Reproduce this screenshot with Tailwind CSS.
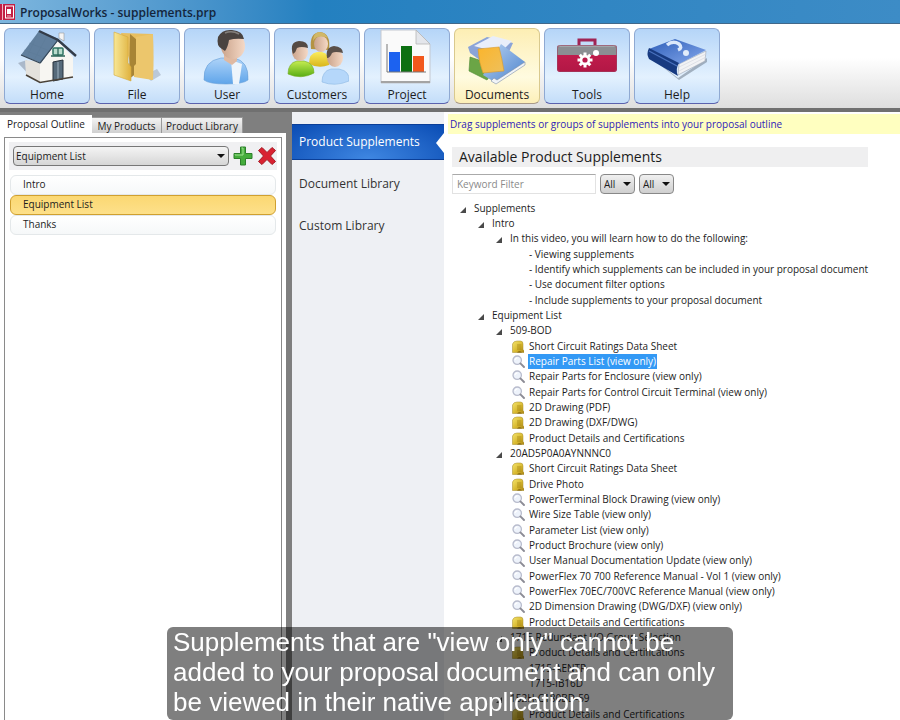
<!DOCTYPE html>
<html lang="en">
<head>
<meta charset="utf-8">
<meta name="viewport" content="width=device-width, initial-scale=1">
<title>ProposalWorks - supplements.prp</title>
<script src="https://cdn.jsdelivr.net/npm/@tailwindcss/browser@4"></script>
</head>
<body class="h-screen overflow-hidden flex flex-col bg-white text-[#1c1c1c] font-['Open_Sans','Noto_Sans',sans-serif]">

<svg class="absolute w-0 h-0" aria-hidden="true">
  <defs>
    <linearGradient id="gold" x1="0" y1="0" x2="1" y2="1"><stop offset="0" stop-color="#f4e46c"/><stop offset=".6" stop-color="#d6b62c"/><stop offset="1" stop-color="#a88418"/></linearGradient>
    <symbol id="doc" viewBox="0 0 12 13">
      <path d="M.5 4 Q1.500 1 5 1 H8.500 Q11 1 11 4 V9.500 L12 10.500 V12.500 H.5Z" fill="url(#gold)" stroke="#a58a28" stroke-width=".5"/>
      <path d="M5 5H9.500M5 7H9.500M5 9H9.500" stroke="#96760f" stroke-width=".6"/>
      <path d="M5 12.500 Q7.500 10 10 12.500Z" fill="#80620e"/>
    </symbol>
    <symbol id="lens" viewBox="0 0 13 13">
      <circle cx="5.2" cy="5.2" r="4.2" fill="#eef3fb" stroke="#b8bccd" stroke-width="1.3"/>
      <path d="M3 5Q3.3 3 5.4 2.8" stroke="#fff" stroke-width="1.2" fill="none"/>
      <path d="M8.4 8.4L12 12" stroke="#8c8c96" stroke-width="1.9" stroke-linecap="round"/>
    </symbol>
    <symbol id="open" viewBox="0 0 6 6"><path d="M6 0V6H0Z" fill="#4a4a4a"/></symbol>
  </defs>
</svg>

<header class="shrink-0">
  <div class="flex items-center gap-1 h-6 border-b border-[#41688a] bg-linear-to-r from-[#7db6de] via-[#2380c0] via-35% to-[#3d8cc6]">
    <svg class="w-4 h-4" viewBox="0 0 16 16" aria-hidden="true"><rect width="15" height="16" fill="#c31f44"/><path d="M2.5 0V16" stroke="#f2b8c4"/><rect x="5.5" y="2" width="8" height="12" fill="#c31f44" stroke="#fff"/><rect x="7" y="5" width="4" height="5" fill="#fff"/><path d="M7 12h4" stroke="#f2b8c4"/></svg>
    <h1 class="mt-0.5 text-xs font-semibold text-[#14263c]">ProposalWorks - supplements.prp</h1>
  </div>
  <nav aria-label="Main" class="flex gap-1 px-1 pt-1 pb-1 bg-linear-to-b from-white from-40% to-[#dedede] border-b-4 border-[#707070]">
    <button class="w-[86px] h-19 flex flex-col items-center justify-between rounded-md border border-[#8fa9d2] border-b-[#5b62ae] bg-linear-to-b from-[#b5d5f8] via-[#e3f1fe] via-65% to-[#c3ddf9] text-xs leading-4">
      <svg class="w-16 h-14" viewBox="0 0 64 56" aria-hidden="true">
        <path d="M3 34L12 31V46L20 52Z" fill="#8c98a8" opacity=".6"/>
        <path d="M10 31L25 33V53L11 46Z" fill="#e4e2dd"/><path d="M25 33L43 12L58 28V48L25 53Z" fill="#f7f6f2"/>
        <path d="M44 4h5v8l-5-3z" fill="#f5f5f5" stroke="#999" stroke-width=".6"/>
        <path d="M24 2L44 10L26 34L6 26Z" fill="#617f9d"/><path d="M24 2L12 28M33 5L19 31M9 21L30 29M14 14L35 22" stroke="#5b7894" stroke-width=".4"/>
        <path d="M24 2L43 11L61 27" stroke="#333c49" stroke-width="2.4" fill="none"/><path d="M43 11L25 34L6 26" stroke="#384858" stroke-width="1.2" fill="none"/>
        <path d="M38 33L48 31V50L38 52Z" fill="#566a7a" stroke="#28323c"/><path d="M43 33V51" stroke="#9fb3c2" stroke-width="1"/>
        <rect x="38" y="19" width="10" height="7" rx="1" fill="#b9dccd" stroke="#2d7362" stroke-width="1.5"/><path d="M43 19V27M36 27H50" stroke="#2d6558" stroke-width="1.3"/>
        <path d="M11 46L25 53.500L58 48" stroke="#4a4238" stroke-width="1.6" fill="none"/>
      </svg>Home</button>
    <button class="w-[86px] h-19 flex flex-col items-center justify-between rounded-md border border-[#8fa9d2] border-b-[#5b62ae] bg-linear-to-b from-[#b5d5f8] via-[#e3f1fe] via-65% to-[#c3ddf9] text-xs leading-4">
      <svg class="w-16 h-14" viewBox="0 0 64 56" aria-hidden="true">
        <defs><linearGradient id="f1"><stop offset="0" stop-color="#f8e795"/><stop offset="1" stop-color="#dfb13e"/></linearGradient></defs>
        <path d="M40 46L52 40L56 46L46 52Z" fill="#a9b8c8" opacity=".7"/>
        <path d="M16 4L48 5Q49 30 48 51L29 46Z" fill="#e8bf60"/>
        <path d="M25 5L32 11V44L24 50Z" fill="#a88435"/>
        <path d="M31 8L48 5V51L29 48V37L31 35Z" fill="#ecc66c"/>
        <path d="M9 3L23 8V34L26 38V52L9 46Z" fill="url(#f1)" stroke="#d5aa3d" stroke-width=".6"/>
      </svg>File</button>
    <button class="w-[86px] h-19 flex flex-col items-center justify-between rounded-md border border-[#8fa9d2] border-b-[#5b62ae] bg-linear-to-b from-[#b5d5f8] via-[#e3f1fe] via-65% to-[#c3ddf9] text-xs leading-4">
      <svg class="w-16 h-14" viewBox="0 0 64 56" aria-hidden="true">
        <defs>
          <linearGradient id="skin"><stop offset="0" stop-color="#c9a28a"/><stop offset="1" stop-color="#f5d9c6"/></linearGradient>
          <linearGradient id="blue" x1="0" y1="0" x2="0" y2="1"><stop offset="0" stop-color="#aed3f8"/><stop offset="1" stop-color="#5fa5ea"/></linearGradient>
        </defs>
        <path d="M9 51Q8 32 26 29H39Q54 32 53 51Q48 55 31 55Q14 55 9 51Z" fill="url(#blue)" stroke="#6a9fd6" stroke-width=".6"/>
        <path d="M36 31L47 35L44 55H38Z" fill="#edf4fb"/>
        <path d="M29 23H42V32L37 36L29 31Z" fill="#dfb9a2"/>
        <ellipse cx="38" cy="17" rx="12" ry="13" fill="url(#skin)"/>
        <path d="M27 20Q21 17 23 8Q27 0 37 1Q48 2 49 10Q40 9 34 11Q33 18 30 22Z" fill="#4a4340"/>
        <path d="M30 4Q37 1 44 5" stroke="#85807c" stroke-width="1.500" fill="none"/>
      </svg>User</button>
    <button class="w-[86px] h-19 flex flex-col items-center justify-between rounded-md border border-[#8fa9d2] border-b-[#5b62ae] bg-linear-to-b from-[#b5d5f8] via-[#e3f1fe] via-65% to-[#c3ddf9] text-xs leading-4">
      <svg class="w-16 h-14" viewBox="0 0 64 56" aria-hidden="true">
        <defs>
          <linearGradient id="gr" x1="0" y1="0" x2="0" y2="1"><stop offset="0" stop-color="#c5ec51"/><stop offset="1" stop-color="#58ad14"/></linearGradient>
          <linearGradient id="ye" x1="0" y1="0" x2="0" y2="1"><stop offset="0" stop-color="#faec5c"/><stop offset="1" stop-color="#d9b51c"/></linearGradient>
        </defs>
        <path d="M24 35Q24 24 32 23H37Q45 25 44 36Q34 40 24 35Z" fill="url(#ye)"/>
        <path d="M26 20Q24 4 35 3Q46 4 44 21Z" fill="#b49343"/><ellipse cx="36" cy="15" rx="7" ry="8" fill="url(#skin)"/>
        <path d="M28 12Q32 5 43 9Q40 3 34 3Q28 4 28 12Z" fill="#d1b868"/>
        <path d="M3 45Q3 34 12 32H19Q29 34 29 44Q16 51 3 45Z" fill="url(#gr)" stroke="#75ad21" stroke-width=".6"/>
        <ellipse cx="15" cy="23" rx="8" ry="9" fill="url(#skin)"/><path d="M8 25Q4 13 14 12Q23 12 23 19Q16 17 12 19Q11 23 8 25Z" fill="#554a43"/>
        <path d="M37 53Q37 42 46 40H54Q65 42 64 52Q50 58 37 53Z" fill="#b5d7fa" stroke="#8cb7e2" stroke-width=".6"/>
        <ellipse cx="50" cy="29" rx="8" ry="9" fill="url(#skin)"/><path d="M42 29Q40 18 49 17Q58 18 58 24Q50 22 47 24Q45 29 42 29Z" fill="#5b5049"/>
      </svg>Customers</button>
    <button class="w-[86px] h-19 flex flex-col items-center justify-between rounded-md border border-[#8fa9d2] border-b-[#5b62ae] bg-linear-to-b from-[#b5d5f8] via-[#e3f1fe] via-65% to-[#c3ddf9] text-xs leading-4">
      <svg class="w-16 h-14" viewBox="0 0 64 56" aria-hidden="true">
        <path d="M6 1H41L55 15V54H6Z" fill="#fafafa" stroke="#c4c8d0"/><path d="M41 1V15H55Z" fill="#e4e6eb" stroke="#b5b5b5" stroke-width=".8"/>
        <path d="M6 53H55" stroke="#a4a4a4" stroke-width="2"/>
        <rect x="14" y="23" width="11" height="20" fill="#1c62f0"/><rect x="26" y="17" width="11" height="26" fill="#0d7012"/><rect x="38" y="27" width="11" height="16" fill="#f2581c"/>
        <path d="M12 15V43H51" stroke="#777" fill="none"/>
      </svg>Project</button>
    <button aria-pressed="true" class="w-[86px] h-19 flex flex-col items-center justify-between rounded-md border border-[#d9c98e] border-b-[#a99a8a] bg-linear-to-b from-[#fdeeb4] via-[#fffbe0] via-65% to-[#fdefb8] text-xs leading-4">
      <svg class="w-16 h-14" viewBox="0 0 64 56" aria-hidden="true">
        <defs><linearGradient id="or" x1="0" y1="0" x2="1" y2="1"><stop offset="0" stop-color="#fbb52c"/><stop offset="1" stop-color="#eec05c"/></linearGradient>
        <linearGradient id="bp" x1="0" y1="0" x2="1" y2="1"><stop offset="0" stop-color="#b9d2f2"/><stop offset="1" stop-color="#4b83cd"/></linearGradient></defs>
        <path d="M3 18L22 8L48 14L34 45L5 24Z" fill="#8ba4d8"/><path d="M9 17L28 7L47 12L35 24Z" fill="#e9eefa"/>
        <path d="M5 28L32 37L22 51L4 42Z" fill="#6ba546" stroke="#4d8a36" stroke-width=".6"/>
        <path d="M36 15L60 33L31 54L18 46Z" fill="url(#bp)"/><path d="M60 33V36L31 55L26 52L29 49L32 51Z" fill="#f1f4f8" stroke="#8091a8" stroke-width=".6"/>
        <path d="M13 20L34 18Q37 29 39 42L18 44Q14 34 13 20Z" fill="url(#or)" stroke="#d9992c" stroke-width=".6"/>
      </svg>Documents</button>
    <button class="w-[86px] h-19 flex flex-col items-center justify-between rounded-md border border-[#8fa9d2] border-b-[#5b62ae] bg-linear-to-b from-[#b5d5f8] via-[#e3f1fe] via-65% to-[#c3ddf9] text-xs leading-4">
      <svg class="w-16 h-14" viewBox="0 0 64 56" aria-hidden="true">
        <defs><linearGradient id="rd" x1="0" y1="0" x2="0" y2="1"><stop offset="0" stop-color="#c81f50"/><stop offset="1" stop-color="#b21745"/></linearGradient></defs>
        <path d="M24 16V11H40V16" fill="none" stroke="#a02455" stroke-width="3"/>
        <rect x="2" y="16" width="60" height="27" rx="3" fill="url(#rd)"/>
        <path d="M2 26V19Q2 16 5 16H59Q62 16 62 19V26Z" fill="#8b8e92"/><path d="M3 17H61" stroke="#b9bcc0"/>
        <rect x="2.500" y="16.500" width="59" height="26" rx="3" fill="none" stroke="#9d4262" stroke-opacity=".6"/>
        <path d="M30 23.500V38.500M22.500 31H37.500M24.700 25.700L35.300 36.300M24.700 36.300L35.300 25.700" stroke="#fff" stroke-width="3"/>
        <circle cx="30" cy="31" r="5.200" fill="#fff"/><circle cx="30" cy="31" r="2.600" fill="#b81a4b"/><circle cx="41" cy="24" r="3" fill="#fff"/>
      </svg>Tools</button>
    <button class="w-[86px] h-19 flex flex-col items-center justify-between rounded-md border border-[#8fa9d2] border-b-[#5b62ae] bg-linear-to-b from-[#b5d5f8] via-[#e3f1fe] via-65% to-[#c3ddf9] text-xs leading-4">
      <svg class="w-16 h-14" viewBox="0 0 64 56" aria-hidden="true">
        <defs><linearGradient id="bk" x1="0" y1="0" x2="1" y2="1"><stop offset="0" stop-color="#2c5db8"/><stop offset="1" stop-color="#86a9ec"/></linearGradient></defs>
        <path d="M4 27L33 49L62 29V33L34 51Z" fill="#7a8796" opacity=".6"/>
        <path d="M34 35L61 22L60 32L33 46Z" fill="#f2f3f5" stroke="#9fa6b2" stroke-width=".6"/>
        <path d="M34 38L61 25M34 42L61 28" stroke="#d0d4dc" stroke-width=".6"/>
        <path d="M4 20L30 10L61 21L34 35Z" fill="url(#bk)"/>
        <path d="M4 19L34 34Q30 40 33 47L4 30Q1 25 4 19Z" fill="#173a80"/>
        <path d="M4 22L32 37" stroke="#4a72bd" stroke-width="1.200"/>
        <path d="M22 16Q28 11 34 15Q38 19 33 21" stroke="#dce9fb" stroke-width="3.500" fill="none"/><circle cx="41" cy="24" r="3" fill="#e2edfb"/>
      </svg>Help</button>
  </nav>
</header>

<div class="flex-1 min-h-0 flex bg-[#7f7f7f]">
  <section aria-label="Proposal outline" class="w-[286px] mr-1.5 flex flex-col pt-[3px]">
    <div role="tablist" class="flex items-end text-[10px] leading-4">
      <button role="tab" aria-selected="true" class="w-[92px] h-[18px] bg-white">Proposal Outline</button>
      <button role="tab" aria-selected="false" class="w-[70px] h-4 leading-[14px] border-t border-r border-[#999] bg-linear-to-b from-[#f3f3f3] to-[#d0d0d0]">My Products</button>
      <button role="tab" aria-selected="false" class="w-[81px] h-4 leading-[14px] border-t border-r border-[#999] bg-linear-to-b from-[#f3f3f3] to-[#d0d0d0]">Product Library</button>
    </div>
    <div class="flex-1 flex flex-col bg-white px-1 pt-1">
      <div class="flex-1 border border-b-0 border-[#8a8a8a] px-1 pt-1">
        <div class="flex items-center gap-1 p-1 pr-0 bg-[#f0f0f2]">
          <div class="relative flex-1">
            <select aria-label="Section" class="block appearance-none w-full h-5 rounded-sm border border-[#777] bg-linear-to-b from-[#f4f4f4] to-[#d6d6d6] px-0.5 text-[10px] leading-4"><option>Equipment List</option><option>Intro</option><option>Thanks</option></select>
            <svg class="absolute right-1 top-2 w-2 h-1 pointer-events-none" viewBox="0 0 8 4" aria-hidden="true"><path d="M0 0H8L4 4Z" fill="#111"/></svg>
          </div>
          <button aria-label="Add"><svg class="w-5 h-5" viewBox="0 0 20 20" aria-hidden="true"><path d="M7.500 1H12.500V7.500H19V12.500H12.500V19H7.500V12.500H1V7.500H7.500Z" fill="#45ad3c" stroke="#2c7f2a"/><path d="M8.500 2H10V9H2V8.500" stroke="#9fe08f" fill="none"/></svg></button>
          <button aria-label="Delete"><svg class="w-5 h-5" viewBox="0 0 20 20" aria-hidden="true"><path d="M1.500 4.500L5 1.500L10 6.500L15 1.500L18.500 4.500L13.500 10L18.500 15.500L15 18.500L10 13.500L5 18.500L1.500 15.500L6.500 10Z" fill="#d92231" stroke="#a61a24"/></svg></button>
        </div>
        <ul class="mt-[5px] mx-px text-[10px] leading-4">
          <li class="h-5 px-3 rounded-md border border-[#e4e8ea] bg-linear-to-b from-white to-[#f6f8f9]">Intro</li>
          <li class="h-5 px-3 rounded-md border border-[#d0a030] bg-linear-to-b from-[#fbd872] to-[#fde08a]">Equipment List</li>
          <li class="h-5 px-3 rounded-md border border-[#e4e8ea] bg-linear-to-b from-white to-[#f6f8f9]">Thanks</li>
        </ul>
      </div>
    </div>
  </section>

  <nav aria-label="Libraries" class="w-38 bg-[#eef0f4] pt-3 flex flex-col text-xs text-[#333]">
    <a href="#" aria-current="page" class="relative h-9 px-[7px] flex items-center text-white bg-radial-[at_50%_100%] from-[#3f87e2] to-[#0a4cb4] border-y border-[#0b3f98]">Product Supplements
      <svg class="absolute right-0 top-2 w-2 h-5" viewBox="0 0 8 20" aria-hidden="true"><path d="M8 0V20L0 10Z" fill="#fff"/></svg></a>
    <a href="#" class="h-12 px-[7px] flex items-center">Document Library</a>
    <a href="#" class="h-9 px-[7px] flex items-center">Custom Library</a>
  </nav>

  <main class="flex-1 min-w-0 bg-white pl-1 pt-0.5">
    <p class="h-5 px-0.5 bg-[#ffffc0] text-[10px] leading-5 font-medium text-[#2f22b8]">Drag supplements or groups of supplements into your proposal outline</p>
    <h2 class="ml-1 mr-8 mt-[13px] h-5 px-[7px] bg-[#efeff0] text-sm leading-5">Available Product Supplements</h2>
    <div class="ml-1 mt-[7px] flex gap-1 text-[10px] leading-4">
      <input type="text" aria-label="Keyword Filter" placeholder="Keyword Filter" class="w-36 h-5 px-1 border border-[#e2e2e2] border-t-[#aaa] placeholder:text-[#8a8a8a]">
      <div class="relative"><select aria-label="Type filter" class="appearance-none w-[35px] h-5 rounded-sm border border-[#888] bg-linear-to-b from-[#f0f0f0] to-[#cfcfcf] px-[3px]"><option>All</option></select><svg class="absolute right-1 top-2 w-2 h-1 pointer-events-none" viewBox="0 0 8 4" aria-hidden="true"><path d="M0 0H8L4 4Z" fill="#111"/></svg></div>
      <div class="relative"><select aria-label="Status filter" class="appearance-none w-[35px] h-5 rounded-sm border border-[#888] bg-linear-to-b from-[#f0f0f0] to-[#cfcfcf] px-[3px]"><option>All</option></select><svg class="absolute right-1 top-2 w-2 h-1 pointer-events-none" viewBox="0 0 8 4" aria-hidden="true"><path d="M0 0H8L4 4Z" fill="#111"/></svg></div>
    </div>
    <ul id="tree" role="tree" aria-label="Supplements" class="mt-[7px] ml-3 text-[10px] leading-[15px] whitespace-nowrap [&>li:nth-child(3n)]:mb-px"></ul>
  </main>
</div>

<p class="fixed left-[167px] bottom-0 w-[566px] h-[93px] rounded-md bg-black/50 pl-1.5 pr-2 text-[26px] leading-[30px] text-white font-['Liberation_Sans',Arial,sans-serif]">Supplements that are "view only" cannot be added to your proposal document and can only be viewed in their native application.</p>

<script>
  // Each row: kind (b = branch, t = text, d = document, v = view only, s = selected), level, label
  const rows = [
    ['b',0,'Supplements'],['b',1,'Intro'],['b',2,'In this video, you will learn how to do the following:'],
    ['t',3,'- Viewing supplements'],['t',3,'- Identify which supplements can be included in your proposal document'],
    ['t',3,'- Use document filter options'],['t',3,'- Include supplements to your proposal document'],
    ['b',1,'Equipment List'],['b',2,'509-BOD'],['d',3,'Short Circuit Ratings Data Sheet'],
    ['s',3,'Repair Parts List (view only)'],['v',3,'Repair Parts for Enclosure (view only)'],
    ['v',3,'Repair Parts for Control Circuit Terminal (view only)'],['d',3,'2D Drawing (PDF)'],
    ['d',3,'2D Drawing (DXF/DWG)'],['d',3,'Product Details and Certifications'],
    ['b',2,'20AD5P0A0AYNNNC0'],['d',3,'Short Circuit Ratings Data Sheet'],['d',3,'Drive Photo'],
    ['v',3,'PowerTerminal Block Drawing (view only)'],['v',3,'Wire Size Table (view only)'],
    ['v',3,'Parameter List (view only)'],['v',3,'Product Brochure (view only)'],
    ['v',3,'User Manual Documentation Update (view only)'],['v',3,'PowerFlex 70 700 Reference Manual - Vol 1 (view only)'],
    ['v',3,'PowerFlex 70EC/700VC Reference Manual (view only)'],['v',3,'2D Dimension Drawing (DWG/DXF) (view only)'],
    ['d',3,'Product Details and Certifications'],['b',2,'1715 Redundant I/O Group Selection'],
    ['d',3,'Product Details and Certifications'],['t',3,'1715-AENTR'],['t',3,'1715-IB16D'],
    ['b',2,'152H-C180BD-59'],['d',3,'Product Details and Certifications']
  ];
  const pads = ['pl-0', 'pl-[18px]', 'pl-9', 'pl-[52px]'];
  const icons = {
    b: '<svg class="w-1.5 h-1.5 mr-[7px] mt-0.5" aria-hidden="true"><use href="#open"/></svg>',
    t: '<span class="w-4"></span>',
    d: '<svg class="w-3 h-[13px] mr-1" aria-hidden="true"><use href="#doc"/></svg>',
    v: '<svg class="w-[13px] h-[13px] mr-[3px]" aria-hidden="true"><use href="#lens"/></svg>'
  };
  document.getElementById('tree').innerHTML = rows.map(([k, level, label]) =>
    `<li role="treeitem" aria-level="${level + 1}" aria-selected="${k === 's'}" class="flex items-center ${pads[level]}">${icons[k === 's' ? 'v' : k]}<span class="${k === 's' ? 'px-px bg-[#3399f5] text-white' : 'px-px'}">${label}</span></li>`).join('');
</script>
</body>
</html>
